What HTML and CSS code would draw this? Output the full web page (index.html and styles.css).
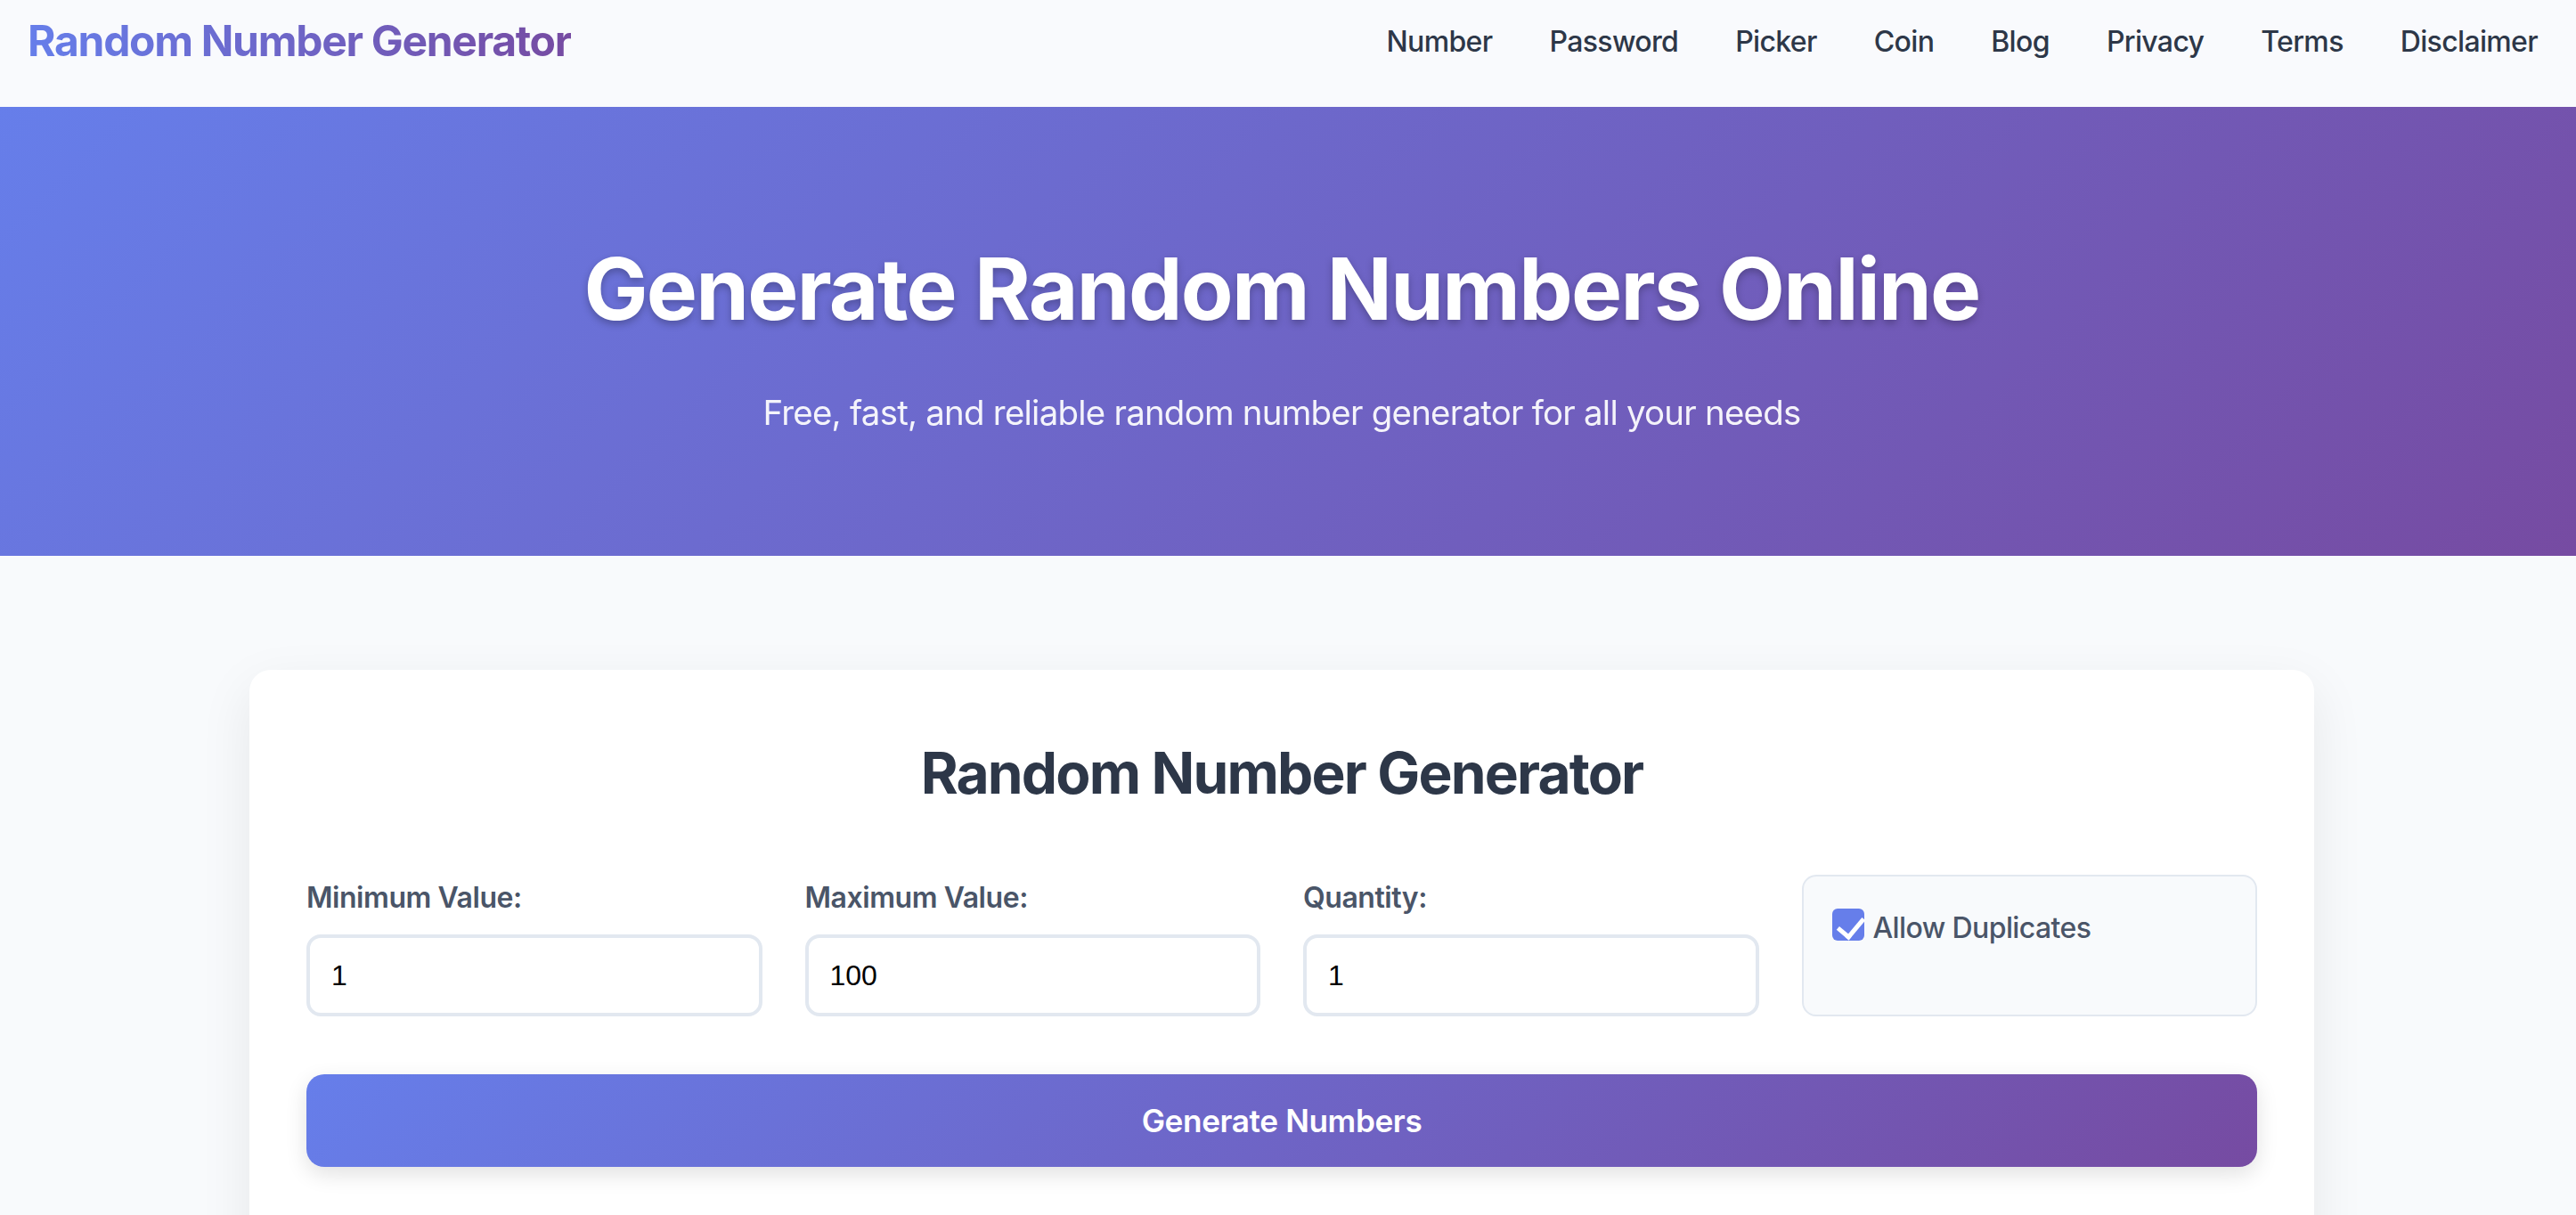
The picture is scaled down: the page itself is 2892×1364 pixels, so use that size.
FILE: index.html
```html
<!DOCTYPE html>
<html lang="en">
<head>
<meta charset="utf-8">
<title>Random Number Generator</title>
<link rel="stylesheet" href="styles.css">
</head>
<body>
<header class="site-header">
  <a class="logo" href="#">Random Number Generator</a>
  <nav class="nav">
    <a href="#">Number</a>
    <a href="#">Password</a>
    <a href="#">Picker</a>
    <a href="#">Coin</a>
    <a href="#">Blog</a>
    <a href="#">Privacy</a>
    <a href="#">Terms</a>
    <a href="#">Disclaimer</a>
  </nav>
</header>

<section class="hero">
  <h1 class="hero-title">Generate Random Numbers Online</h1>
  <p class="hero-sub">Free, fast, and reliable random number generator for all your needs</p>
</section>

<main class="main">
  <div class="card">
    <h2 class="card-title">Random Number Generator</h2>
    <div class="form-grid">
      <div class="field">
        <label class="field-label" for="min">Minimum Value:</label>
        <input class="field-input" id="min" type="text" value="1">
      </div>
      <div class="field">
        <label class="field-label" for="max">Maximum Value:</label>
        <input class="field-input" id="max" type="text" value="100">
      </div>
      <div class="field">
        <label class="field-label" for="qty">Quantity:</label>
        <input class="field-input" id="qty" type="text" value="1">
      </div>
      <div class="check-group">
        <label class="check">
          <input class="check-box" type="checkbox" checked>
          <span class="check-text">Allow Duplicates</span>
        </label>
      </div>
    </div>
    <button class="btn" type="button">Generate Numbers</button>
    <div class="result"></div>
  </div>
</main>
</body>
</html>
```

FILE: styles.css
```css
* {
  box-sizing: border-box;
}

html, body {
  margin: 0;
  padding: 0;
}

body {
  font-family: Inter, "Noto Sans", "Liberation Sans", sans-serif;
  line-height: 1.6;
  background: #f8fafc;
  color: #2d3748;
}

a {
  text-decoration: none;
}

/* Header */
.site-header {
  display: flex;
  align-items: center;
  justify-content: space-between;
  padding: 8px 43px 35px 31px;
  background: #f9fafd;
}

.logo {
  font-size: 48px;
  font-weight: 700;
  line-height: 1.6;
  letter-spacing: -1.3px;
  background: linear-gradient(90deg, #667eea, #764ba2);
  -webkit-background-clip: text;
  background-clip: text;
  color: transparent;
}

.nav {
  display: flex;
  gap: 64px;
}

.nav a {
  font-size: 32px;
  font-weight: 500;
  line-height: 1.6;
  letter-spacing: -0.65px;
  color: #2d3748;
}

/* Hero */
.hero {
  background: linear-gradient(135deg, #667eea 0%, #764ba2 100%);
  color: #fff;
  text-align: center;
  padding: 128px 14px 128px 0;
  height: 504px;
}

.hero-title {
  margin: 0 0 32px;
  font-size: 96px;
  font-weight: 700;
  line-height: 1.6;
  letter-spacing: -1.7px;
  text-shadow: 0 4px 8px rgba(0, 0, 0, 0.25);
}

.hero-sub {
  margin: 0;
  font-size: 38.4px;
  font-weight: 400;
  line-height: 1.6;
  letter-spacing: -0.75px;
  opacity: 0.93;
}

/* Main */
.main {
  padding: 128px 14px 128px 0;
}

.card {
  max-width: 2318px;
  margin: 0 auto;
  background: #fff;
  border-radius: 24px;
  padding: 64px 64px 64px;
  box-shadow: 0 20px 60px rgba(0, 0, 0, 0.08);
}

.card-title {
  margin: 1px 0 63px;
  text-align: center;
  font-size: 64px;
  font-weight: 700;
  line-height: 1.6;
  letter-spacing: -1.85px;
  color: #2d3748;
}

.form-grid {
  display: grid;
  grid-template-columns: repeat(4, 1fr);
  gap: 48px;
}

.field {
  display: flex;
  flex-direction: column;
}

.field-label {
  display: block;
  margin-bottom: 16px;
  font-size: 32px;
  font-weight: 600;
  line-height: 1.6;
  letter-spacing: -0.45px;
  color: #4a5568;
}

.field-input {
  width: 100%;
  height: 92px;
  padding: 0 24px;
  border: 4px solid #e2e8f0;
  border-radius: 16px;
  background: #fff;
  font-family: "Liberation Sans", Arial, sans-serif;
  font-size: 32px;
  color: #000;
  outline: none;
}

.check-group {
  border: 2px solid #e2e8f0;
  border-radius: 16px;
  background: #f8fafc;
  padding: 32px;
}

.check {
  display: flex;
  align-items: flex-start;
  gap: 10px;
}

.check-box {
  appearance: none;
  -webkit-appearance: none;
  flex: none;
  position: relative;
  width: 36px;
  height: 36px;
  margin: 4px 0 0;
  border-radius: 6px;
  background: #667eea;
}

.check-box::after {
  content: "";
  position: absolute;
  left: 12px;
  top: 4px;
  width: 13px;
  height: 24px;
  border: solid #fff;
  border-width: 0 5px 5px 0;
  transform: rotate(40deg);
}

.check-text {
  font-size: 32px;
  font-weight: 500;
  line-height: 1.6;
  letter-spacing: -0.6px;
  color: #4a5568;
}

.btn {
  display: block;
  width: 100%;
  margin-top: 65px;
  padding: 32px;
  border: none;
  border-radius: 20px;
  background: linear-gradient(135deg, #667eea 0%, #764ba2 100%);
  color: #fff;
  font-family: Inter, "Noto Sans", sans-serif;
  font-size: 35.2px;
  font-weight: 600;
  line-height: 40px;
  letter-spacing: -0.4px;
  box-shadow: 0 8px 24px rgba(0, 0, 0, 0.12);
}

.result {
  height: 200px;
}
```
